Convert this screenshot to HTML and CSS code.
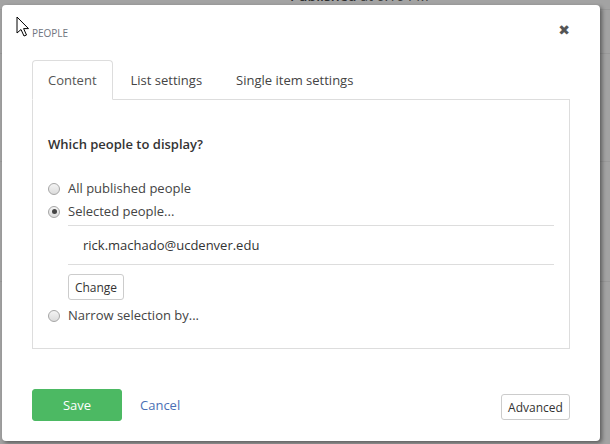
FILE: index.html
```html
<!DOCTYPE html>
<html>
<head>
<meta charset="utf-8">
<link rel="stylesheet" href="styles.css">
</head>
<body>
<div class="page">
  <div class="page-status"><b>Published</b> at 6:16 PM</div>
  <div class="page-rows">
    <div class="page-row r1"></div>
    <div class="page-row r2"></div>
    <div class="page-row r3"></div>
    <div class="page-row r4"></div>
  </div>
</div>

<div class="modal">
  <div class="modal-header">
    <span class="modal-title">PEOPLE</span>
    <span class="modal-close">&#10006;</span>
  </div>

  <div class="tabs">
    <div class="tab active">Content</div>
    <div class="tab">List settings</div>
    <div class="tab">Single item settings</div>
  </div>

  <div class="panel">
    <div class="question">Which people to display?</div>
    <div class="options">
      <label class="option"><span class="radio"></span>All published people</label>
      <label class="option"><span class="radio checked"></span>Selected people...</label>
      <div class="selection">
        <div class="selected-item">rick.machado@ucdenver.edu</div>
        <button class="btn btn-small">Change</button>
      </div>
      <label class="option"><span class="radio"></span>Narrow selection by...</label>
    </div>
  </div>

  <div class="modal-footer">
    <button class="btn btn-save">Save</button>
    <a class="cancel">Cancel</a>
    <button class="btn btn-advanced">Advanced</button>
  </div>
</div>

<svg class="cursor" width="14" height="22" viewBox="0 0 14 22">
  <path d="M1 1 L1 17 L5 13.5 L8 20 L10.5 19 L7.6 12.6 L12.5 12.6 Z" fill="#fff" stroke="#000" stroke-width="1" stroke-linejoin="round"/>
</svg>
</body>
</html>
```

FILE: styles.css
```css
* { box-sizing: border-box; }
html, body { margin: 0; padding: 0; }
body {
  width: 610px;
  height: 444px;
  overflow: hidden;
  background: #a3a3a3;
  font-family: "Open Sans", "Liberation Sans", sans-serif;
  color: #333;
  position: relative;
}

.page { height: 444px; position: relative; }
.page-status {
  margin-top: -12px;
  margin-left: 290px;
  font-size: 14px;
  line-height: 16px;
  color: #3a3a3a;
}
.page-status b { font-weight: 600; color: #2e2e2e; }
.page-rows { display: flex; flex-direction: column; }
.page-row { border-bottom: 1px solid #999; }
.r1 { height: 6px; }
.r2 { height: 44px; }
.r3 { height: 108px; border-bottom-color: #9a9a9a; }
.r4 { height: 120px; }

.modal {
  position: absolute;
  left: 2px;
  top: 5px;
  width: 598px;
  height: 436px;
  background: #fff;
  border-radius: 4px;
  box-shadow: 2px 2px 4px rgba(0,0,0,0.45);
  padding: 0 30px;
  display: flex;
  flex-direction: column;
}

.modal-header {
  display: flex;
  justify-content: space-between;
  align-items: flex-start;
  padding-top: 19px;
  height: 55px;
}
.modal-title {
  font-size: 10px;
  line-height: 16px;
  color: #6f7580;
  padding-top: 1px;
}
.modal-close {
  font-size: 14px;
  line-height: 14px;
  color: #555;
  font-weight: bold;
  margin-top: -1px;
  margin-right: 0;
  font-family: "DejaVu Sans", sans-serif;
}

.tabs {
  display: flex;
  border-bottom: 1px solid #ddd;
}
.tab {
  font-size: 13px;
  line-height: 18px;
  padding: 10px 15px;
  border: 1px solid transparent;
  border-radius: 4px 4px 0 0;
  margin-right: 2px;
  margin-bottom: -1px;
  color: #444;
}
.tab.active {
  border-color: #ddd;
  border-bottom-color: #fff;
  background: #fff;
  color: #555;
}

.panel {
  border: 1px solid #ddd;
  border-top: none;
  padding: 35px 15px 17px;
  height: 249px;
}
.question {
  font-size: 13px;
  font-weight: 600;
  line-height: 18px;
  color: #333;
  margin-bottom: 24px;
}
.options { display: flex; flex-direction: column; }
.option {
  display: flex;
  align-items: center;
  font-size: 13px;
  line-height: 23px;
  color: #444;
}
.radio {
  width: 12px;
  height: 12px;
  border-radius: 50%;
  border: 1px solid #a6a6a6;
  background: linear-gradient(#f4f4f4, #dcdcdc);
  margin-right: 8px;
  display: flex;
  align-items: center;
  justify-content: center;
}
.radio.checked::after {
  content: "";
  width: 5px;
  height: 5px;
  border-radius: 50%;
  background: #444;
}
.selection {
  margin-left: 20px;
  padding: 2px 0 4px;
}
.selected-item {
  border-top: 1px solid #ddd;
  border-bottom: 1px solid #ddd;
  height: 40px;
  line-height: 38px;
  padding-left: 15px;
  font-size: 13px;
  color: #333;
  margin-bottom: 9px;
}
.btn {
  font-family: "Open Sans", "Liberation Sans", sans-serif;
  background: #fff;
  border: 1px solid #ccc;
  border-radius: 3px;
  color: #333;
  cursor: pointer;
  padding: 0;
}
.btn-small {
  font-size: 12px;
  height: 26px;
  width: 56px;
}

.modal-footer {
  display: flex;
  align-items: center;
  margin-top: 40px;
}
.btn-save {
  background: #4cb963;
  border-color: #4cb963;
  color: #fff;
  font-size: 13px;
  width: 90px;
  height: 32px;
}
.cancel {
  color: #4a6fb5;
  font-size: 13px;
  margin-left: 18px;
}
.btn-advanced {
  margin-left: auto;
  margin-top: 4px;
  font-size: 12px;
  height: 26px;
  width: 69px;
}

.cursor {
  position: absolute;
  left: 16px;
  top: 16px;
}
```
